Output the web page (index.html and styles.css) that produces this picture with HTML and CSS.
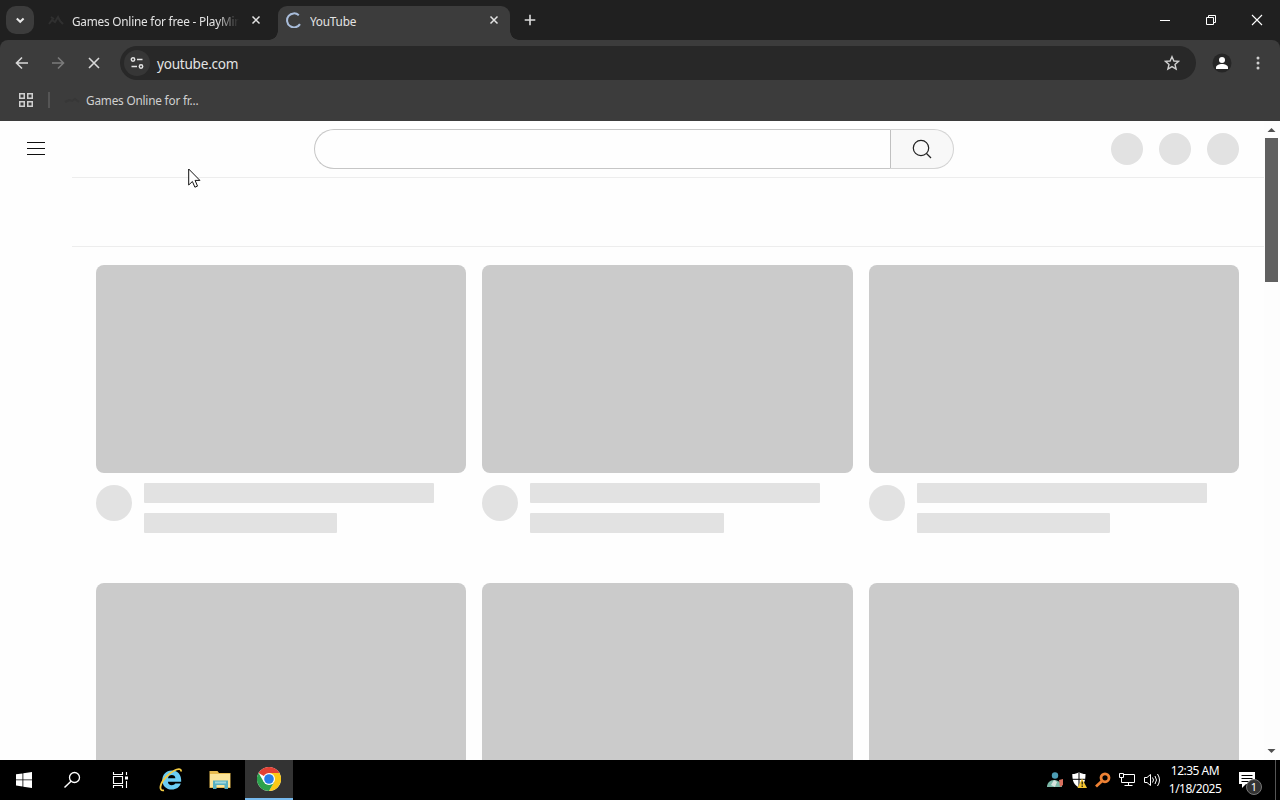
FILE: index.html
```html
<!DOCTYPE html>
<html lang="en">

<head>
    <meta charset="utf-8">
    <title>YouTube</title>
    <link rel="stylesheet" href="styles.css">
</head>

<body>

    <!-- Tabs -->
    <div class="tab-strip">
        <div class="tab-search">
            <svg width="28" height="28" viewBox="0 0 28 28"><path d="M10.8 12.5l3.4 3.3 3.4-3.3" fill="none" stroke="#e8e8e8" stroke-width="2"/></svg>
        </div>
        <div class="tab">
            <svg class="favicon" width="16" height="16" viewBox="0 0 16 16"><path d="M1 12l3-4 3 2 3-5 2 4 3 3M3 5l3 2" fill="none" stroke="#303030" stroke-width="2"/></svg>
            <span class="tab-title faded">Games Online for free - PlayMini</span>
            <svg class="tab-close" width="16" height="16" viewBox="0 0 16 16"><path d="M4.5 4.5l7 7M11.5 4.5l-7 7" stroke="#e3e3e3" stroke-width="1.5"/></svg>
        </div>
        <div class="tab active">
            <svg class="favicon" width="16" height="16" viewBox="0 0 16 16"><path d="M12.8 3.2A7 7 0 1 0 14 12.1" fill="none" stroke="#a9bddb" stroke-width="2"/></svg>
            <span class="tab-title">YouTube</span>
            <svg class="tab-close" width="16" height="16" viewBox="0 0 16 16"><path d="M4.5 4.5l7 7M11.5 4.5l-7 7" stroke="#e3e3e3" stroke-width="1.5"/></svg>
        </div>
        <svg class="new-tab" width="16" height="16" viewBox="0 0 16 16"><path d="M8 2.7v10.6M2.7 8h10.6" stroke="#dcdcdc" stroke-width="1.6"/></svg>
        <div class="window-buttons">
            <svg width="46" height="40" viewBox="0 0 46 40"><path d="M18 20.5h10" stroke="#fff"/></svg>
            <svg width="46" height="40" viewBox="0 0 46 40"><path d="M18.5 17.5h7v7h-7zM20.5 17v-1.5h7v7h-2" fill="none" stroke="#fff"/></svg>
            <svg width="46" height="40" viewBox="0 0 46 40"><path d="M18 15l10 10M28 15l-10 10" stroke="#fff" stroke-width="1.1"/></svg>
        </div>
    </div>

    <!-- Address bar and bookmarks -->
    <div class="chrome">
        <div class="toolbar">
            <svg width="36" height="34" viewBox="0 0 36 34"><path d="M24 17H13M18 11.5L12.5 17l5.5 5.500" fill="none" stroke="#d8d8d8" stroke-width="1.6"/></svg>
            <svg width="36" height="34" viewBox="0 0 36 34"><path d="M12 17h11M18 11.5l5.5 5.5-5.5 5.500" fill="none" stroke="#7b7b7b" stroke-width="1.6"/></svg>
            <svg width="36" height="34" viewBox="0 0 36 34"><path d="M13 12l10 10M23 12L13 22" stroke="#d8d8d8" stroke-width="1.6"/></svg>
            <div class="omnibox">
                <div class="site-info">
                    <svg width="16" height="16" viewBox="0 0 16 16"><g fill="none" stroke="#e3e3e3" stroke-width="1.5"><circle cx="4" cy="4.5" r="1.7"/><path d="M8 4.5h5.5M2.5 11.5H8"/><circle cx="12" cy="11.5" r="1.7"/></g></svg>
                </div>
                <span class="url">youtube.com</span>
                <svg class="star" width="16" height="16" viewBox="0 0 16 16"><path d="M8 1.7l1.9 4.3 4.7.4-3.6 3.1 1.1 4.6L8 11.600l-4.100 2.500L5 9.500 1.400 6.400l4.700-.4z" fill="none" stroke="#d0d0d0" stroke-width="1.4"/></svg>
            </div>
            <svg class="profile" width="24" height="24" viewBox="0 0 24 24"><circle cx="12" cy="12" r="9.5" fill="#262626"/><circle cx="12" cy="9" r="3" fill="#fff"/><path d="M6 18v-1.5c0-2.300 3-3.500 6-3.500s6 1.200 6 3.500V18z" fill="#fff"/></svg>
            <svg class="menu" width="16" height="16" viewBox="0 0 16 16"><g fill="#cfcfcf"><circle cx="8" cy="3" r="1.5"/><circle cx="8" cy="8" r="1.5"/><circle cx="8" cy="13" r="1.5"/></g></svg>
        </div>
        <div class="bookmarks">
            <svg width="16" height="16" viewBox="0 0 16 16"><path d="M1.75 1.75h4.500v4.500h-4.500zM9.750 1.750h4.500v4.500h-4.500zM1.750 9.750h4.500v4.500h-4.500zM9.750 9.750h4.500v4.500h-4.500z" fill="none" stroke="#d0d0d0" stroke-width="1.5"/></svg>
            <span class="divider"></span>
            <svg class="bookmark-icon" width="16" height="16" viewBox="0 0 16 16"><path d="M1 10l4-2 3 1 3-2 4 3" fill="none" stroke="#373737" stroke-width="2"/></svg>
            <span class="bookmark">Games Online for fr...</span>
        </div>
    </div>

    <!-- Page being loaded -->
    <div class="page">
        <div class="content">
            <div class="masthead">
                <svg class="guide" width="24" height="24" viewBox="0 0 24 24"><path d="M3 6.500h18M3 12.500h18M3 18.500h18" stroke="#0f0f0f"/></svg>
                <div class="search">
                    <div class="search-input"></div>
                    <div class="search-button">
                        <svg width="24" height="24" viewBox="0 0 24 24"><circle cx="11" cy="11" r="7.700" fill="none" stroke="#222" stroke-width="1.2"/><path d="M16.500 16.500l4.500 4.500" stroke="#222" stroke-width="1.2"/></svg>
                    </div>
                </div>
                <div class="actions">
                    <span></span>
                    <span></span>
                    <span></span>
                </div>
            </div>
            <div class="chips"></div>
            <div class="grid">
                <div class="card">
                    <div class="thumb"></div>
                    <div class="details">
                        <div class="avatar"></div>
                        <div class="lines"><div class="line"></div><div class="line short"></div></div>
                    </div>
                </div>
                <div class="card">
                    <div class="thumb"></div>
                    <div class="details">
                        <div class="avatar"></div>
                        <div class="lines"><div class="line"></div><div class="line short"></div></div>
                    </div>
                </div>
                <div class="card">
                    <div class="thumb"></div>
                    <div class="details">
                        <div class="avatar"></div>
                        <div class="lines"><div class="line"></div><div class="line short"></div></div>
                    </div>
                </div>
                <div class="card"><div class="thumb"></div></div>
                <div class="card"><div class="thumb"></div></div>
                <div class="card"><div class="thumb"></div></div>
            </div>
        </div>
        <div class="scrollbar">
            <svg width="15" height="17" viewBox="0 0 15 17"><path d="M3.500 11l4-4 4 4z" fill="#505050"/></svg>
            <div class="thumb-bar"></div>
            <svg class="down" width="15" height="17" viewBox="0 0 15 17"><path d="M3.500 6l4 4 4-4z" fill="#505050"/></svg>
        </div>
        <svg class="cursor" width="13" height="21" viewBox="0 0 13 21"><path d="M.7 1v16l3.700-3.500 2.500 5.700 2.600-1.100L7.100 12.400h4.800z" fill="#fff" stroke="#111"/></svg>
    </div>

    <!-- Taskbar -->
    <div class="taskbar">
        <div class="task">
            <svg width="16" height="16" viewBox="0 0 16 16"><path d="M0 2.300l6.500-.9v6.100H0zM7.300 1.300L16 0v7.500H7.300zM0 8.300h6.500v6.200L0 13.600zM7.300 8.300H16V16l-8.700-1.300z" fill="#fff"/></svg>
        </div>
        <div class="task">
            <svg width="18" height="18" viewBox="0 0 18 18"><circle cx="11.500" cy="6.500" r="5" fill="none" stroke="#fff" stroke-width="1.3"/><path d="M8 10.200L1.500 16.500" stroke="#fff" stroke-width="1.5"/></svg>
        </div>
        <div class="task">
            <svg width="17" height="16" viewBox="0 0 17 16"><path d="M1.500 0v2.500h9V0M1.500 16v-2.500h9V16M1.500 4.500h9v7h-9zM14.500 0v3M14.500 9v7" fill="none" stroke="#fff" stroke-width="1.1"/><path d="M13 4.500h3v3h-3z" fill="#fff"/></svg>
        </div>
        <div class="task wide">
            <svg width="24" height="24" viewBox="0 0 24 24"><path d="M12.800 2.500c-6 0-9.500 4.500-9.500 9.700 0 5.700 4 9.300 9.500 9.300 4.500 0 7.700-2.200 9-6h-5.500c-.8 1.200-2 1.700-3.500 1.700-2.200 0-3.800-1.400-3.900-3.500h13.300C22.600 7 19 2.500 12.800 2.500zM9 10.200c.3-2 1.800-3.200 3.800-3.200s3.400 1.200 3.600 3.200z" fill="#6bcdf4"/><path d="M5 22.300C-1 23.500 1 14.500 8 8S22-1.300 22.200 3.500" fill="none" stroke="#f4cb43" stroke-width="1.800"/></svg>
        </div>
        <div class="task explorer">
            <svg width="24" height="24" viewBox="0 0 24 24"><path d="M1.500 3h8l1.500 2h11.500v15h-21z" fill="#e7bb50"/><path d="M2 6h20v13H2z" fill="#fbe49a"/><path d="M5 21v-8.500h15V21h-3.500v-4h-8v4z" fill="#57b0c0"/><path d="M7 13.500h11v2H7z" fill="#9cd7dd"/></svg>
        </div>
        <div class="task current">
            <svg width="24" height="24" viewBox="0 0 24 24"><circle cx="12" cy="12" r="12" fill="#fff"/><path d="M12 12L1.600 6a12 12 0 0 1 20.800 0z" fill="#e24135"/><path d="M12 6h10.400A12 12 0 0 1 12 24l5.200-9z" fill="#fbc816"/><path d="M6.800 15L1.600 6A12 12 0 0 0 12 24l5.200-9z" fill="#2ca24c"/><circle cx="12" cy="12" r="6" fill="#fff"/><circle cx="12" cy="12" r="4.800" fill="#277ce8"/></svg>
        </div>
        <div class="tray">
            <svg width="16" height="16" viewBox="0 0 16 16"><circle cx="8" cy="3.500" r="3.200" fill="#4d9db5"/><path d="M0 15c0-4 3-7 7-7s7 2 8 7z" fill="#7cb8a8"/><path d="M7 8l3 2-2 5-4-2z" fill="#d6e2dc"/><path d="M12 8l4-1v6l-3 2z" fill="#d9705e"/></svg>
            <svg width="16" height="16" viewBox="0 0 16 16"><path d="M8 0c2 1.500 4 2 6.500 2 0 7-1.500 11-6.500 13.500C3 13 1.300 9 1.300 2 4 2 6 1.500 8 0z" fill="#fff"/><path d="M8 0v15M1 7.300h13" stroke="#000"/><path d="M11 6.500l5 9.500H6.500z" fill="#f4c531"/><path d="M11.200 9.500v3M11.200 13.500V15" stroke="#111" stroke-width="1.2"/></svg>
            <svg width="16" height="16" viewBox="0 0 16 16"><circle cx="10" cy="5.800" r="4" fill="none" stroke="#ed8134" stroke-width="2.800"/><path d="M7 9l-6 5.500" stroke="#ed8134" stroke-width="2.800"/></svg>
            <svg width="17" height="16" viewBox="0 0 17 16"><path d="M4.500 2.500h11v8h-12M9.500 10.500v3M5.500 13.500h8M.5 1.500h4v4h-4zM2.500 5.500v5h2" fill="none" stroke="#fff"/></svg>
            <svg width="17" height="16" viewBox="0 0 17 16"><path d="M.5 5.500h2.500l3.500-3v11L3 10.500H.5zM8.500 5.500q2 2.500 0 5M11 4q3 4 0 8M13.500 2q4 6 0 12" fill="none" stroke="#fff"/></svg>
            <div class="clock">
                <span class="time">12:35 AM</span>
                <span class="date">1/18/2025</span>
            </div>
            <div class="notifications">
                <svg width="16" height="16" viewBox="0 0 16 16"><path d="M0 0h16v12H7l-4 4v-4H0z" fill="#fff"/><path d="M2.500 3.500h11M2.500 6.500h11M2.500 9.500h7" stroke="#000"/></svg>
                <span class="badge">1</span>
            </div>
            <span class="show-desktop"></span>
        </div>
    </div>

</body>

</html>
```
FILE: styles.css
```css
* {
    box-sizing: border-box;
}

body {
    margin: 0;
    width: 1280px;
    height: 800px;
    display: flex;
    flex-direction: column;
    overflow: hidden;
    background-color: #202020;
    font-family: "Noto Sans", "Open Sans", sans-serif;
    font-size: 12px;
    color: #e3e3e3;
}

svg {
    display: block;
    flex: none;
}

/* Tabs */
.tab-strip {
    height: 40px;
    display: flex;
    align-items: center;
    padding-left: 6px;
}

.tab-search {
    width: 28px;
    height: 28px;
    border-radius: 10px;
    background-color: #3c3c3c;
}

.tab {
    width: 232px;
    height: 34px;
    display: flex;
    align-items: center;
    padding: 0 8px 6px;
    margin-top: 6px;
    margin-left: 6px;
}

.tab.active {
    position: relative;
    background-color: #3c3c3c;
    border-radius: 9px 9px 0 0;
}

.tab.active::before,
.tab.active::after {
    content: "";
    position: absolute;
    bottom: 0;
    width: 9px;
    height: 9px;
}

.tab.active::before {
    left: -9px;
    background: radial-gradient(circle at 0 0, transparent 8.5px, #3c3c3c 9px);
}

.tab.active::after {
    right: -9px;
    background: radial-gradient(circle at 100% 0, transparent 8.5px, #3c3c3c 9px);
}

.tab-title {
    flex: 1;
    margin-left: 8px;
    padding-top: 1px;
    overflow: hidden;
    white-space: nowrap;
    font-size: 11.8px;
    letter-spacing: -0.22px;
}

.faded {
    -webkit-mask-image: linear-gradient(to right, #000 145px, transparent 167px);
    mask-image: linear-gradient(to right, #000 145px, transparent 167px);
}

.tab-close {
    margin-left: 1px;
}

.new-tab {
    margin-left: 12px;
}

.window-buttons {
    display: flex;
    margin-left: auto;
}

/* Address bar and bookmarks */
.chrome {
    height: 81px;
    background-color: #3c3c3c;
    border-radius: 8px 8px 0 0;
}

.toolbar {
    height: 46px;
    display: flex;
    align-items: center;
    padding-left: 4px;
}

.omnibox {
    width: 1076px;
    height: 34px;
    margin-left: 8px;
    padding: 0 16px 0 4px;
    display: flex;
    align-items: center;
    border-radius: 17px;
    background-color: #282828;
}

.site-info {
    width: 26px;
    height: 26px;
    display: flex;
    align-items: center;
    justify-content: center;
    border-radius: 50%;
    background-color: #363636;
}

.url {
    margin-left: 7px;
    font-size: 13.6px;
    letter-spacing: -0.25px;
}

.star {
    margin-left: auto;
}

.profile {
    margin-left: 14px;
}

.menu {
    margin-left: 16px;
}

.bookmarks {
    height: 28px;
    display: flex;
    align-items: center;
    padding-left: 18px;
    color: #d0d0d0;
}

.divider {
    width: 2px;
    height: 16px;
    margin-left: 14px;
    background-color: #555;
}

.bookmark-icon {
    margin-left: 14px;
}

.bookmark {
    margin-left: 6px;
    font-size: 11.8px;
    letter-spacing: -0.2px;
}

/* Page being loaded */
.page {
    position: relative;
    height: 639px;
    display: flex;
    overflow: hidden;
    background-color: #fefefe;
}

.content {
    width: 1264px;
}

.masthead {
    height: 56px;
    display: flex;
    align-items: center;
    padding: 0 25px 0 24px;
}

.guide {
    margin-bottom: 2px;
}

.search {
    display: flex;
    margin-left: 266px;
}

.search-input {
    width: 576px;
    height: 40px;
    border: 1px solid #c6c6c6;
    border-right: none;
    border-radius: 20px 0 0 20px;
}

.search-button {
    width: 64px;
    height: 40px;
    display: flex;
    align-items: center;
    justify-content: center;
    border: 1px solid #d3d3d3;
    border-left-color: #c0c0c0;
    border-radius: 0 20px 20px 0;
    background-color: #f8f8f8;
}

.actions {
    display: flex;
    gap: 16px;
    margin-left: auto;
}

.actions span {
    width: 32px;
    height: 32px;
    border-radius: 50%;
    background-color: #e2e2e2;
}

.chips {
    height: 70px;
    margin-left: 72px;
    border-top: 1px solid #ededed;
    border-bottom: 1px solid #ededed;
}

.grid {
    display: grid;
    grid-template-columns: repeat(3, 1fr);
    gap: 50px 16px;
    padding: 18px 25px 0 96px;
}

.thumb {
    height: 208px;
    border-radius: 8px;
    background-color: #cbcbcb;
}

.details {
    display: flex;
    gap: 12px;
    padding-top: 10px;
}

.avatar {
    width: 36px;
    height: 36px;
    margin-top: 2px;
    border-radius: 50%;
    background-color: #e2e2e2;
}

.lines {
    flex: 1;
}

.line {
    width: 90%;
    height: 20px;
    margin-bottom: 10px;
    border-radius: 1px;
    background-color: #e2e2e2;
}

.line.short {
    width: 60%;
    margin-bottom: 0;
}

.scrollbar {
    width: 16px;
    display: flex;
    flex-direction: column;
    background-color: #fdfdfd;
}

.thumb-bar {
    width: 13px;
    height: 144px;
    margin-left: 1px;
    background-color: #606060;
}

.down {
    margin-top: auto;
}

.cursor {
    position: absolute;
    left: 188px;
    top: 47px;
}

/* Taskbar */
.taskbar {
    height: 40px;
    display: flex;
    background-color: #000;
    color: #fff;
}

.task {
    width: 48px;
    display: flex;
    align-items: center;
    justify-content: center;
}

.task.wide {
    width: 53px;
}

.task.explorer {
    padding-right: 2px;
}

.task.current {
    background-color: #333;
    border-bottom: 2px solid #76b9ed;
}

.tray {
    display: flex;
    align-items: center;
    gap: 8px;
    margin-left: auto;
}

.clock {
    width: 52px;
    margin-right: 7px;
    display: flex;
    flex-direction: column;
    align-items: center;
    line-height: 18px;
    white-space: nowrap;
    letter-spacing: -0.5px;
}

.notifications {
    position: relative;
    width: 28px;
    margin-left: 3px;
}

.badge {
    position: absolute;
    left: 7px;
    top: 7px;
    width: 16px;
    height: 16px;
    border: 1px solid #777;
    border-radius: 50%;
    background-color: #333;
    font-size: 11px;
    line-height: 14px;
    text-align: center;
}

.show-desktop {
    width: 5px;
    height: 40px;
    border-left: 1px solid #555;
}
```
